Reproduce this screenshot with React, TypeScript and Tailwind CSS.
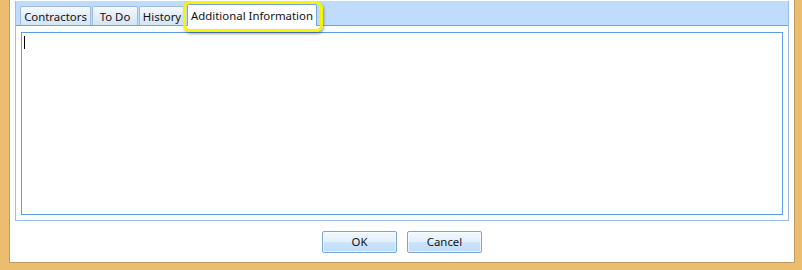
const tabs = [
  { label: 'Contractors', w: 'w-[71px]' },
  { label: 'To Do', w: 'w-[46px]' },
  { label: 'History', w: 'w-[46px]' },
];

function Tab({ label, w }: { label: string; w: string }) {
  return (
    <div
      className={`${w} h-[19px] mr-px flex items-center justify-center pt-px border border-b-0 border-[#9ebbdd] rounded-t-[2px] bg-[linear-gradient(to_bottom,#f5f9fe_0%,#e3eefa_50%,#d3e4f7_100%)] text-[11.4px] leading-none text-[#111]`}
    >
      {label}
    </div>
  );
}

function Button({ label }: { label: string }) {
  return (
    <button className="w-[75px] h-[22px] rounded-[2px] border border-[#7fa5d6] bg-[linear-gradient(to_bottom,#f2f8fe_0%,#e2effc_48%,#cde4fb_52%,#bedcfb_100%)] shadow-[inset_0_0_0_1px_rgba(255,255,255,0.6)] text-[11.4px] leading-none text-[#111]">
      {label}
    </button>
  );
}

export default function App() {
  return (
    <div
      className="w-[802px] h-[270px] bg-[#ecbd6f] pl-[9px] pr-[7px] pb-[7px]"
      style={{ fontFamily: '"Noto Sans", "Open Sans", sans-serif' }}
    >
      <div className="h-[263px] bg-white border-x border-b border-[#c19c5e] flex flex-col">
        <div className="ml-[5px] mt-[1px] w-[774px] h-[220px] border-x border-b border-[#9dbde3] flex flex-col">
          <div className="relative h-[25px] bg-[#bfdcfd] border-b border-[#72a6e2] flex items-end pl-[4px]">
            {tabs.map((t) => (
              <Tab key={t.label} label={t.label} w={t.w} />
            ))}
            <div className="relative ml-px -mb-px w-[130px] h-[22px] flex items-center justify-center pt-px border border-b-0 border-[#72a6e2] rounded-t-[2px] bg-white text-[11.4px] leading-none text-[#111]">
              Additional Information
              <div className="absolute -left-[5px] -right-[7px] -top-[4px] -bottom-[6px] rounded-[7px] border-[3px] border-[#f7f400] shadow-[1px_2px_3px_rgba(0,0,0,0.35)]" />
            </div>
          </div>
          <div className="flex-1 px-[5px] pt-[6px] pb-[5px]">
            <div className="h-full border border-[#5c9de3] pl-[2px] pt-[3px]">
              <div className="w-px h-[13px] bg-black" />
            </div>
          </div>
        </div>
        <div className="mt-[10px] flex justify-center gap-[10px]">
          <Button label="OK" />
          <Button label="Cancel" />
        </div>
      </div>
    </div>
  );
}
